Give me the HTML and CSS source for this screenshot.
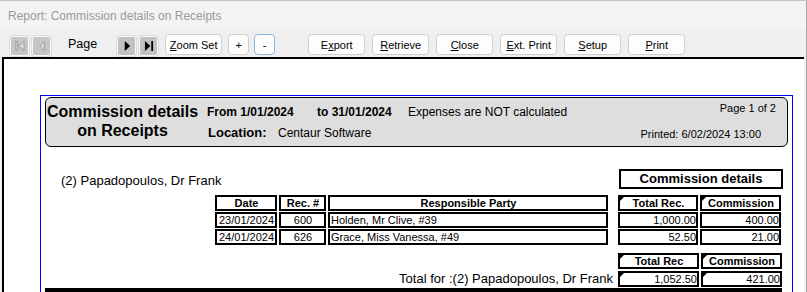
FILE: index.html
```html
<!DOCTYPE html>
<html lang="en">
<head>
    <meta charset="UTF-8">
    <meta name="viewport" content="width=device-width, initial-scale=1.0">
    <title>Report: Commission details on Receipts</title>
    <link rel="stylesheet" href="styles.css">
</head>
<body>
    <div class="window">
        <div class="title-bar">Report: Commission details on Receipts</div>

        <div class="toolbar">
            <button class="nav-btn" disabled>
                <svg viewBox="0 0 11 12" class="nav-icon"><rect x="1" y="1" width="2" height="10"></rect><path d="M10 1 L4 6 L10 11 Z"></path></svg>
            </button>
            <button class="nav-btn" disabled>
                <svg viewBox="0 0 11 12" class="nav-icon"><path d="M8 1 L3 6 L8 11 Z"></path></svg>
            </button>
            <span class="page-label">Page</span>
            <button class="nav-btn nav-next">
                <svg viewBox="0 0 11 12" class="nav-icon"><path d="M3 0.5 L9 6 L3 11.5 Z"></path></svg>
            </button>
            <button class="nav-btn">
                <svg viewBox="0 0 11 12" class="nav-icon"><path d="M1 0.5 L7 6 L1 11.5 Z"></path><rect x="8" y="0.5" width="2" height="11"></rect></svg>
            </button>
            <button class="btn btn-zoom"><u>Z</u>oom Set</button>
            <button class="btn btn-small">+</button>
            <button class="btn btn-small btn-focus">-</button>
            <button class="btn btn-action btn-export">E<u>x</u>port</button>
            <button class="btn btn-action"><u>R</u>etrieve</button>
            <button class="btn btn-action"><u>C</u>lose</button>
            <button class="btn btn-action"><u>E</u>xt. Print</button>
            <button class="btn btn-action"><u>S</u>etup</button>
            <button class="btn btn-action"><u>P</u>rint</button>
        </div>

        <div class="viewport">
            <div class="page">
                <div class="report-head">
                    <div class="head-title">Commission details<br>on Receipts</div>
                    <div class="head-info">
                        <div class="info-line">
                            <span class="info-from">From 1/01/2024</span>
                            <span class="info-to">to 31/01/2024</span>
                            <span class="info-note">Expenses are NOT calculated</span>
                        </div>
                        <div class="info-line info-location">
                            <span class="location-label">Location:</span>
                            <span class="location-value">Centaur Software</span>
                        </div>
                    </div>
                    <div class="head-meta">
                        <div class="meta-page">Page 1 of 2</div>
                        <div class="meta-printed">Printed: 6/02/2024 13:00</div>
                    </div>
                </div>

                <div class="group-row">
                    <div class="group-name">(2) Papadopoulos, Dr Frank</div>
                    <div class="section-box">Commission details</div>
                </div>

                <div class="detail-grid">
                    <div class="cell cell-head">Date</div>
                    <div class="cell cell-head">Rec. #</div>
                    <div class="cell cell-head">Responsible Party</div>
                    <div class="cell cell-head col-total mark">Total Rec.</div>
                    <div class="cell cell-head mark">Commission</div>

                    <div class="cell center">23/01/2024</div>
                    <div class="cell center">600</div>
                    <div class="cell">Holden, Mr Clive, #39</div>
                    <div class="cell num col-total">1,000.00</div>
                    <div class="cell num">400.00</div>

                    <div class="cell center">24/01/2024</div>
                    <div class="cell center">626</div>
                    <div class="cell">Grace, Miss Vanessa, #49</div>
                    <div class="cell num col-total">52.50</div>
                    <div class="cell num">21.00</div>
                </div>

                <div class="totals">
                    <div class="totals-row">
                        <div class="cell cell-head total-cell mark">Total Rec</div>
                        <div class="cell cell-head comm-cell mark">Commission</div>
                    </div>
                    <div class="totals-row">
                        <div class="total-label">Total for :(2) Papadopoulos, Dr Frank</div>
                        <div class="cell num total-cell mark">1,052.50</div>
                        <div class="cell num comm-cell mark">421.00</div>
                    </div>
                </div>
                <div class="group-rule"></div>
            </div>
        </div>
    </div>
</body>
</html>
```

FILE: styles.css
```css
* {
    box-sizing: border-box;
}

body {
    margin: 0;
    width: 807px;
    height: 292px;
    overflow: hidden;
    background: #f0f0f0;
    font-family: "Liberation Sans", Arial, sans-serif;
    color: #000;
}

.window {
    height: 292px;
    border-top: 1px solid #c4c4c4;
    border-right: 1px solid #aaaaaa;
    display: flex;
    flex-direction: column;
}

.title-bar {
    height: 29px;
    padding: 8px 0 0 8px;
    font-size: 12px;
    line-height: 15px;
    color: #9a9a9a;
    background: #f3f3f3;
}

/* toolbar */

.toolbar {
    height: 27px;
    display: flex;
    align-items: flex-start;
    padding: 4px 0 0 10px;
    background: #efefef;
}

.nav-btn {
    width: 19px;
    height: 20px;
    margin: 2px 3px 0 0;
    padding: 0;
    border: 1px solid #f8f8f8;
    border-radius: 3px;
    background: #c2c2c2;
    box-shadow: 0 0 0 1px #dcdcdc;
    display: flex;
    align-items: center;
    justify-content: center;
    color: #000;
}

.nav-btn:disabled {
    color: #9c9c9c;
    background: #c6c6c6;
}

.nav-icon {
    width: 10px;
    height: 12px;
    fill: currentColor;
}

.nav-btn:disabled .nav-icon {
    fill: #dadada;
    stroke: #8e8e8e;
    stroke-width: 0.8;
}

.nav-next {
    margin-left: 0;
}

.page-label {
    font-size: 12.5px;
    line-height: 16px;
    margin: 2px 20px 0 14px;
}

.btn {
    height: 21px;
    padding: 0;
    border: 1px solid #d0d0d0;
    border-radius: 4px;
    background: #fdfdfd;
    font-family: "Liberation Sans", Arial, sans-serif;
    font-size: 11px;
    color: #000;
    cursor: pointer;
}

.btn-zoom {
    width: 57px;
    margin-left: 4px;
}

.btn-small {
    width: 21px;
    margin-left: 6px;
}

.btn-focus {
    border-color: #8fb4dc;
    margin-left: 5px;
}

.btn-action {
    width: 57px;
    margin-left: 7px;
}

.btn-export {
    margin-left: 33px;
}

/* report viewport */

.viewport {
    flex: 1;
    margin: 0 2px 0 2px;
    border-top: 2px solid #000;
    border-left: 2px solid #000;
    background: #fff;
    overflow: hidden;
}

.page {
    width: 753px;
    height: 400px;
    margin: 36px 0 0 36px;
    border: 1px solid #0000ff;
}

.report-head {
    height: 50px;
    margin: 1px 4px 0 4px;
    border: 1px solid #000;
    border-radius: 6px;
    background: #dedede;
    display: flex;
}

.head-title {
    width: 153px;
    padding-top: 4px;
    font-size: 16px;
    line-height: 19px;
    font-weight: bold;
    text-align: center;
}

.head-info {
    flex: 1;
    padding: 6px 0 0 8px;
}

.info-line {
    display: flex;
    font-size: 12px;
    line-height: 16px;
}

.info-from {
    width: 110px;
    font-weight: bold;
}

.info-to {
    width: 91px;
    font-weight: bold;
}

.info-location {
    margin-top: 5px;
    font-size: 13px;
    padding-left: 1px;
}

.location-label {
    width: 70px;
    font-weight: bold;
}

.location-value {
    font-size: 12px;
}

.head-meta {
    padding-top: 3px;
    font-size: 11px;
    line-height: 14px;
    text-align: right;
}

.meta-page {
    padding-right: 11px;
}

.meta-printed {
    margin-top: 12px;
    padding-right: 26px;
}

/* group detail */

.group-row {
    display: flex;
    justify-content: space-between;
    align-items: flex-end;
    margin: 22px 9px 0 20px;
}

.group-name {
    font-size: 13px;
    line-height: 16px;
}

.section-box {
    width: 164px;
    height: 20px;
    border: 2px solid #000;
    font-size: 13px;
    line-height: 16px;
    font-weight: bold;
    text-align: center;
}

.detail-grid {
    display: grid;
    grid-template-columns: 62px 47px 280px 88px 81px;
    grid-auto-rows: 16px;
    column-gap: 2px;
    row-gap: 1px;
    margin: 6px 0 0 174px;
}

.cell {
    border: 2px solid #000;
    font-size: 11px;
    line-height: 12px;
    white-space: nowrap;
    overflow: hidden;
    padding: 0 0 0 1px;
}

.cell-head {
    font-weight: bold;
    text-align: center;
}

.center {
    text-align: center;
}

.num {
    text-align: right;
    padding: 0;
}

.col-total {
    margin-left: 8px;
}

.mark {
    position: relative;
}

.mark::before {
    content: "";
    position: absolute;
    left: 0;
    top: 0;
    border-style: solid;
    border-width: 4px 4px 0 0;
    border-color: #000 transparent transparent transparent;
}

/* group totals */

.totals {
    margin: 8px 10px 0 0;
    display: flex;
    flex-direction: column;
    gap: 1px;
}

.totals-row {
    display: flex;
    justify-content: flex-end;
    align-items: center;
    gap: 2px;
}

.totals-row .cell {
    height: 16px;
}

.total-cell {
    width: 81px;
}

.comm-cell {
    width: 81px;
}

.total-label {
    font-size: 13px;
    line-height: 16px;
    margin-right: 3px;
    padding-top: 1px;
}

.group-rule {
    height: 5px;
    margin: 1px 10px 0 4px;
    background: #000;
}
```
